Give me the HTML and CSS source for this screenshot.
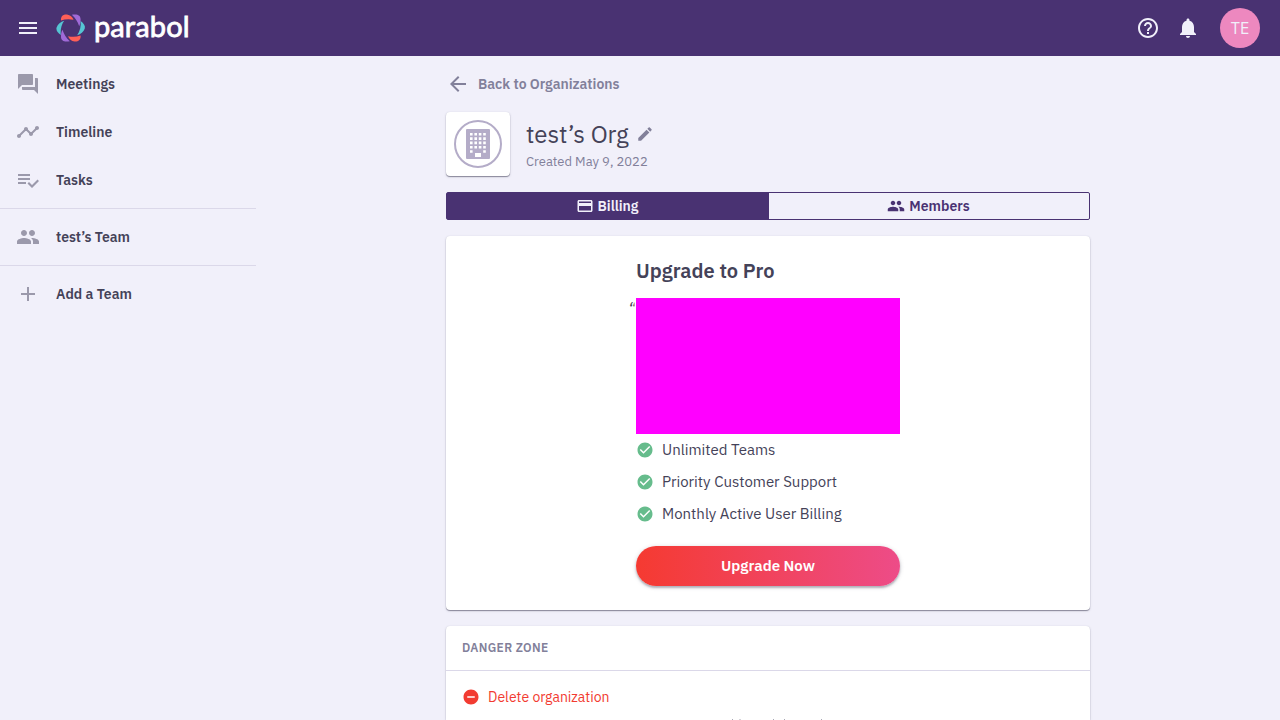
FILE: index.html
```html
<!DOCTYPE html>
<html lang="en">
<head>
<meta charset="utf-8">
<title>Parabol | Organization</title>
<link rel="stylesheet" href="styles.css">
</head>
<body>
<header class="topbar">
  <svg class="icon menu" viewBox="0 0 24 24"><path d="M3 18h18v-2H3v2zm0-5h18v-2H3v2zm0-7v2h18V6H3z"/></svg>
  <div class="brand">
    <svg class="mark" viewBox="0 0 30 28">
      <path fill="#ff5f57" d="M5 6.500C4.600 2 7.500 0 11 .5c3.500 .5 5.200 2.500 6.600 5.200C13 4.800 9 5 5 6.500z"/>
      <path fill="#a06ad8" d="M15.800 .8C21 -.4 24.600 1 24.600 5.200c0 2.800-.3 4.800-1.400 7C21.500 7.500 19.500 4 15.800 .8z"/>
      <path fill="#56c4d3" d="M24.600 7C27.800 9.200 29.600 12 28.800 14.500c-1 3.200-4.200 5.600-7.600 6.700 2.800-4 4-9 3.400-14.200z"/>
      <path fill="#ff5f57" d="M24.600 21.500c.4 4.500-2.500 6.300-6 6-3.500-.3-5.200-2.500-6.600-5.200 4.600.9 8.600.7 12.600-.8z"/>
      <path fill="#a06ad8" d="M13.800 27.200C8.600 28.400 5 27 5 22.800c0-2.800.3-4.800 1.400-7C8.100 20.500 10.100 24 13.800 27.200z"/>
      <path fill="#56c4d3" d="M4.800 21C1.600 18.800-.2 16 .6 13.500c1-3.200 4.200-5.600 7.600-6.700C5.400 10.800 4.200 15.800 4.800 21z"/>
    </svg>
    <span class="wordmark">parabol</span>
  </div>
  <div class="actions">
    <svg class="icon" viewBox="0 0 24 24"><path d="M11 18h2v-2h-2v2zm1-16C6.480 2 2 6.480 2 12s4.480 10 10 10 10-4.480 10-10S17.520 2 12 2zm0 18c-4.410 0-8-3.590-8-8s3.590-8 8-8 8 3.590 8 8-3.590 8-8 8zm0-14c-2.210 0-4 1.790-4 4h2c0-1.100.9-2 2-2s2 .9 2 2c0 2-3 1.750-3 5h2c0-2.250 3-2.500 3-5 0-2.210-1.790-4-4-4z"/></svg>
    <svg class="icon" viewBox="0 0 24 24"><path d="M12 22c1.100 0 2-.9 2-2h-4c0 1.100.89 2 2 2zm6-6v-5c0-3.070-1.640-5.640-4.500-6.320V4c0-.83-.67-1.500-1.500-1.500s-1.500.67-1.500 1.500v.68C7.630 5.360 6 7.920 6 11v5l-2 2v1h16v-1l-2-2z"/></svg>
    <div class="avatar"><span>TE</span></div>
  </div>
</header>
<div class="layout">
  <nav class="sidebar">
    <a class="nav-item"><svg class="icon" viewBox="0 0 24 24"><path d="M21 6h-2v9H6v2c0 .55.450 1 1 1h11l4 4V7c0-.55-.45-1-1-1zm-4 6V3c0-.55-.45-1-1-1H3c-.55 0-1 .45-1 1v14l4-4h10c.55 0 1-.45 1-1z"/></svg><span>Meetings</span></a>
    <a class="nav-item"><svg class="icon" viewBox="0 0 24 24"><path d="M23 8c0 1.100-.9 2-2 2-.18 0-.35-.02-.51-.07l-3.560 3.550c.05.160.07.340.07.520 0 1.100-.9 2-2 2s-2-.9-2-2c0-.18.020-.36.070-.52l-2.550-2.550c-.16.050-.34.070-.52.070s-.36-.02-.52-.07l-4.550 4.560c.05.160.07.330.07.510 0 1.100-.9 2-2 2s-2-.9-2-2 .9-2 2-2c.18 0 .35.020.51.070l4.560-4.550C8.020 9.360 8 9.180 8 9c0-1.100.9-2 2-2s2 .9 2 2c0 .18-.02.360-.07.520l2.550 2.550c.16-.05.340-.07.520-.07s.36.020.52.070l3.550-3.560C19.020 8.350 19 8.180 19 8c0-1.100.9-2 2-2s2 .9 2 2z"/></svg><span>Timeline</span></a>
    <a class="nav-item"><svg class="icon" viewBox="0 0 24 24"><path d="M14 10H2v2h12v-2zm0-4H2v2h12V6zM2 16h8v-2H2v2zm19.500-4.500L23 13l-6.990 7-4.510-4.500L13 14l3.010 3 5.490-5.500z"/></svg><span>Tasks</span></a>
    <hr class="rule">
    <a class="nav-item"><svg class="icon" viewBox="0 0 24 24"><path d="M16 11c1.660 0 2.990-1.340 2.990-3S17.660 5 16 5s-3 1.340-3 3 1.340 3 3 3zm-8 0c1.660 0 2.990-1.340 2.990-3S9.660 5 8 5 5 6.340 5 8s1.340 3 3 3zm0 2c-2.330 0-7 1.170-7 3.500V19h14v-2.500C15 14.170 10.330 13 8 13zm8 0c-.29 0-.62.020-.97.050 1.160.84 1.970 1.970 1.970 3.450V19h6v-2.500c0-2.330-4.670-3.500-7-3.500z"/></svg><span>test’s Team</span></a>
    <hr class="rule">
    <a class="nav-item"><svg class="icon" viewBox="0 0 24 24"><path d="M19 13h-6v6h-2v-6H5v-2h6V5h2v6h6v2z"/></svg><span>Add a Team</span></a>
  </nav>
  <main class="content">
    <a class="back"><svg class="icon" viewBox="0 0 24 24"><path d="M20 11H7.830l5.590-5.590L12 4l-8 8 8 8 1.410-1.410L7.830 13H20v-2z"/></svg><span>Back to Organizations</span></a>
    <section class="org">
      <div class="org-logo">
        <svg viewBox="0 0 48 48"><circle cx="24" cy="24" r="23" fill="#fff" stroke="#b4acc8" stroke-width="2"/><path fill="#b4acc8" d="M13 9h22q1 0 1 1v28q0 1-1 1H13q-1 0-1-1V10q0-1 1-1z"/><g stroke="#fff" stroke-width="2.600" stroke-dasharray="2.600 1.800"><path d="M16 14.300h16M16 18.600h16M16 22.900h16M16 27.200h16"/><path d="M16 31.500h3M29.200 31.500h3"/></g><path fill="#fff" d="M21 33h6v4h-6z"/></svg>
      </div>
      <div class="org-info">
        <div class="org-title"><h1>test’s Org</h1><svg viewBox="0 0 24 24"><path d="M3 17.250V21h3.750L17.810 9.940l-3.750-3.750L3 17.250zM20.710 7.040c.39-.39.390-1.020 0-1.410l-2.340-2.340c-.39-.39-1.020-.39-1.410 0l-1.830 1.830 3.750 3.750 1.830-1.830z"/></svg></div>
        <div class="created">Created May 9, 2022</div>
      </div>
    </section>
    <div class="tabs">
      <div class="tab active"><svg viewBox="0 0 24 24"><path d="M20 4H4c-1.110 0-1.990.89-1.990 2L2 18c0 1.110.89 2 2 2h16c1.110 0 2-.89 2-2V6c0-1.110-.89-2-2-2zm0 14H4v-6h16v6zm0-10H4V6h16v2z"/></svg><span>Billing</span></div>
      <div class="tab"><svg viewBox="0 0 24 24"><path d="M16 11c1.660 0 2.990-1.340 2.990-3S17.660 5 16 5s-3 1.340-3 3 1.340 3 3 3zm-8 0c1.660 0 2.990-1.340 2.990-3S9.660 5 8 5 5 6.340 5 8s1.340 3 3 3zm0 2c-2.330 0-7 1.170-7 3.500V19h14v-2.500C15 14.170 10.330 13 8 13zm8 0c-.29 0-.62.020-.97.050 1.160.84 1.970 1.970 1.970 3.450V19h6v-2.500c0-2.330-4.670-3.500-7-3.500z"/></svg><span>Members</span></div>
    </div>
    <section class="card upgrade">
      <div class="offer">
        <h2>Upgrade to Pro</h2>
        <div class="quote"><span class="mark-open">“</span></div>
        <ul>
          <li><svg viewBox="0 0 24 24"><path d="M12 2C6.480 2 2 6.480 2 12s4.480 10 10 10 10-4.480 10-10S17.520 2 12 2zm-2 15l-5-5 1.410-1.410L10 14.170l7.590-7.590L19 8l-9 9z"/></svg><span>Unlimited Teams</span></li>
          <li><svg viewBox="0 0 24 24"><path d="M12 2C6.480 2 2 6.480 2 12s4.480 10 10 10 10-4.480 10-10S17.520 2 12 2zm-2 15l-5-5 1.410-1.410L10 14.170l7.590-7.590L19 8l-9 9z"/></svg><span>Priority Customer Support</span></li>
          <li><svg viewBox="0 0 24 24"><path d="M12 2C6.480 2 2 6.480 2 12s4.480 10 10 10 10-4.480 10-10S17.520 2 12 2zm-2 15l-5-5 1.410-1.410L10 14.170l7.590-7.590L19 8l-9 9z"/></svg><span>Monthly Active User Billing</span></li>
        </ul>
        <button class="cta"><span>Upgrade Now</span></button>
      </div>
    </section>
    <section class="card danger">
      <h3><span>DANGER ZONE</span></h3>
      <div class="danger-body">
        <a class="delete"><svg viewBox="0 0 24 24"><path d="M12 2C6.480 2 2 6.480 2 12s4.480 10 10 10 10-4.480 10-10S17.520 2 12 2zm5 11H7v-2h10v2z"/></svg><span>Delete organization</span></a>
      </div>
      <svg class="cut-line" viewBox="0 0 644 1"><path d="M286 0h1v1h-1zM327 0h1v1h-1zM338 0h1v1h-1zM375 0h1v1h-1z"/><path opacity=".5" d="M293 0h2v1h-2z"/></svg>
    </section>
  </main>
</div>
</body>
</html>
```
FILE: styles.css
```css
* { box-sizing: border-box; }
body { margin: 0; height: 720px; overflow: hidden; background: #f1f0fa; color: #444258; font-family: "IBM Plex Sans", Roboto, "Noto Sans", sans-serif; }
svg { fill: currentColor; flex: none; display: block; }
h1, h2, h3, ul { margin: 0; padding: 0; font-weight: 400; }
span { white-space: nowrap; }
.icon { width: 24px; height: 24px; }
.topbar { height: 56px; background: #493272; color: #f1f0fa; display: flex; align-items: center; padding: 0 20px 0 16px; }
.brand { display: flex; align-items: center; margin-left: 16px; }
.mark { width: 30px; height: 28px; }
.wordmark { font: 400 29px/40px Lato, sans-serif; color: #fff; margin: -4px 0 0 8px; letter-spacing: .1px; -webkit-text-stroke: .8px #fff; }
.actions { margin-left: auto; display: flex; align-items: center; gap: 16px; }
.avatar { width: 40px; height: 40px; margin-left: 4px; border-radius: 50%; background: #ed88bf; display: grid; place-items: center; font-size: 16px; }
.layout { display: flex; height: 664px; overflow: hidden; }
.sidebar { width: 256px; padding-top: 4px; }
.nav-item { display: flex; align-items: center; gap: 16px; height: 48px; padding-left: 16px; font-size: 14px; font-weight: 600; }
.nav-item .icon { color: #9b99ab; }
.rule { margin: 4px 0; border: 0; height: 1px; background: #dbd8e9; }
.content { width: 644px; margin-left: 190px; padding-top: 16px; }
.back { display: flex; align-items: center; gap: 8px; height: 24px; font-size: 14px; font-weight: 600; color: #82809a; }
.org { display: flex; gap: 16px; margin-top: 16px; height: 64px; }
.org-logo, .card { background: #fff; border-radius: 4px; box-shadow: 0 0 1px rgba(68,66,88,.12), 0 1px 1px rgba(68,66,88,.55), 0 1px 3px rgba(68,66,88,.12); }
.org-logo { width: 64px; height: 64px; padding: 8px; }
.org-title { display: flex; align-items: center; gap: 7px; height: 36px; margin-top: 4px; color: #82809a; }
.org-title h1 { color: #444258; font-size: 24px; line-height: 36px; }
.org-title svg { width: 18px; height: 18px; }
.created { color: #82809a; font-size: 13px; line-height: 18px; margin-top: 1px; }
.tabs { display: flex; height: 28px; margin-top: 16px; border: 1px solid #493272; border-radius: 2px; color: #493272; font-size: 14px; font-weight: 600; }
.tab { flex: 1; display: flex; align-items: center; justify-content: center; gap: 4px; padding-right: 1px; }
.tab.active { background: #493272; color: #f1f0fa; flex: 0 0 322px; padding-right: 2px; }
.tab svg { width: 18px; height: 18px; }
.upgrade { margin-top: 16px; height: 374px; padding-top: 20px; }
.offer { width: 264px; margin: 0 auto; }
.offer h2 { font-size: 20px; font-weight: 600; line-height: 30px; }
.quote { height: 136px; margin-top: 12px; background: #f0f; position: relative; }
.mark-open { position: absolute; left: -8px; top: 0; font: italic 16px/22px "IBM Plex Sans", sans-serif; clip-path: inset(0 1px 0 0); }
.offer li { display: flex; align-items: center; gap: 8px; height: 32px; font-size: 15px; }
.offer li svg { width: 18px; height: 18px; color: #66bc8c; }
.offer li span { line-height: 24px; }
.cta { display: block; width: 264px; height: 40px; margin-top: 16px; padding: 0; border: 0; border-radius: 20px; background: linear-gradient(90deg, #f53a31, #ed4c88); color: #fff; font: 600 15px/24px "IBM Plex Sans", Roboto, sans-serif; box-shadow: 0 1px 4px rgba(68,66,88,.25), 0 2px 2px rgba(68,66,88,.3); }
.danger { height: 94px; margin-top: 16px; border-radius: 4px 4px 0 0; }
.danger h3 { height: 45px; padding-left: 16px; border-bottom: 1px solid #dbd8e9; color: #82809a; font-size: 12px; font-weight: 600; line-height: 43px; letter-spacing: .36px; }
.danger-body { height: 48px; padding: 16px; }
.delete { display: flex; align-items: center; gap: 8px; height: 20px; color: #f23b31; font-size: 14px; }
.delete svg { width: 18px; height: 18px; }
.cut-line { width: 644px; height: 1px; color: #a9a8b4; }
```
